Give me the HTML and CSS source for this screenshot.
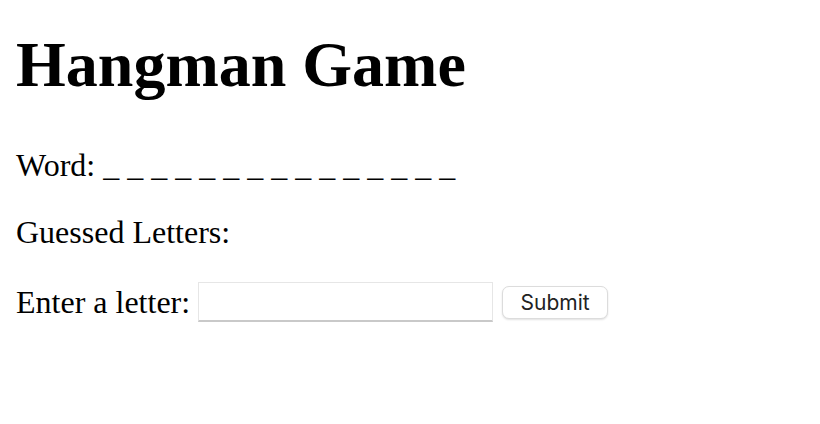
FILE: index.html
```html
<!DOCTYPE html>
<html>
<head>
<meta charset="utf-8">
<link rel="stylesheet" href="styles.css">
<title>Hangman Game</title>
</head>
<body>
<h1 class="title">Hangman Game</h1>
<p class="line">Word: _ _ _ _ _ _ _ _ _ _ _ _ _ _ _</p>
<p class="line">Guessed Letters: </p>
<form class="line entry" onsubmit="return false;">
  <label class="label" for="letter">Enter a letter:</label>
  <input class="field" id="letter" type="text">
  <button class="btn" type="submit">Submit</button>
</form>
</body>
</html>
```
FILE: styles.css
```css
html, body {
  margin: 0;
  background: #fff;
}
body {
  padding: 28px 16px 0 16px;
  font-family: "Liberation Serif", "Times New Roman", serif;
  color: #000;
}
.title {
  margin: 0 0 46px 0;
  font-size: 64px;
  font-weight: bold;
  line-height: 74px;
}
.line {
  margin: 0 0 32px 0;
  font-size: 32px;
  line-height: 35px;
  white-space: pre;
}
.entry {
  display: flex;
  align-items: center;
  margin: 0;
}
.label {
  margin-right: 8px;
}
.field {
  box-sizing: border-box;
  width: 295px;
  height: 40px;
  margin: 0 9px 0 0;
  padding: 0 4px;
  border: 1px solid #e6e6e6;
  border-bottom: 2px solid #c9c9c9;
  border-radius: 0;
  background: #fff;
  font-size: 20px;
  outline: none;
}
.btn {
  box-sizing: border-box;
  width: 106px;
  height: 33px;
  margin: 1px 0 0 0;
  padding: 0;
  border: 1px solid #dcdcdc;
  border-radius: 7px;
  background: #fff;
  box-shadow: 0 1px 2px rgba(0,0,0,0.12);
  font-family: Inter, "Liberation Sans", sans-serif;
  font-size: 21px;
  color: #222;
}
```
